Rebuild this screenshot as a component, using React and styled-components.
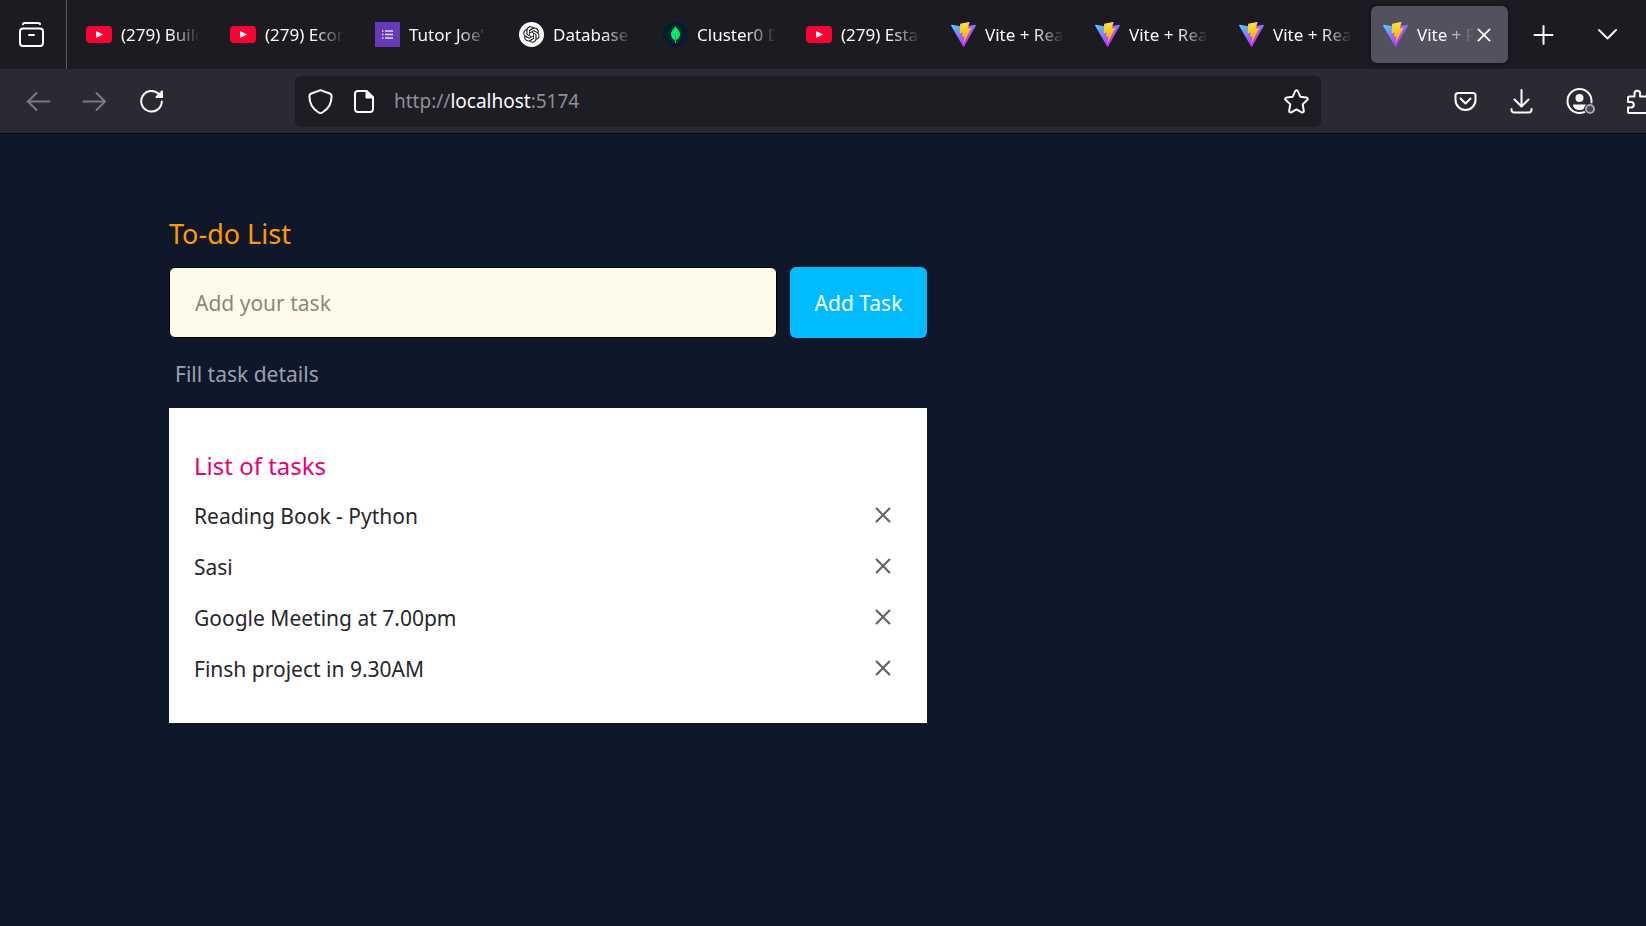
import React, { useState } from "react";
import styled, { createGlobalStyle } from "styled-components";

const GlobalStyle = createGlobalStyle`
  *, *::before, *::after { box-sizing: border-box; }
  html, body, #root { height: 100%; }
  body {
    margin: 0;
    background: #0f172a;
    font-family: "Segoe UI", "Noto Sans", sans-serif;
  }
  h1, h2, p, ul { margin: 0; padding: 0; font-weight: 400; }
  button, input { font: inherit; }
  svg { display: block; flex: none; }
`;

const Browser = styled.div`
  min-height: 100%;
  display: flex;
  flex-direction: column;
  overflow-x: hidden;
`;

const TabStrip = styled.header`
  display: flex;
  align-items: center;
  height: 69px;
  background: #1c1b22;
  color: #fbfbfe;
`;

const IconButton = styled.button`
  display: flex;
  align-items: center;
  justify-content: center;
  flex: none;
  width: ${(p) => p.$width || 56}px;
  height: 48px;
  padding: 0;
  border: 0;
  background: none;
  color: #fbfbfe;
  &:disabled { color: #7b7a81; }
`;

const ViewCell = styled.div`
  display: flex;
  align-items: center;
  flex: none;
  height: 100%;
  padding: 0 3px 0 0;
  border-right: 1px solid #5b5a62;
`;

const Tabs = styled.nav`
  display: flex;
  gap: 7px;
  padding: 0 7px 0 8px;
`;

const Tab = styled.div`
  display: flex;
  align-items: center;
  width: 137px;
  height: 57px;
  padding: 0 12px;
  border-radius: 6px;
  background: ${(p) => (p.$active ? "#52525e" : "transparent")};
  box-shadow: ${(p) => (p.$active ? "0 0 4px rgba(0, 0, 0, 0.5)" : "none")};
`;

const TabLink = styled.a`
  display: flex;
  align-items: center;
  gap: 9px;
  flex: 1;
  min-width: 0;
  color: inherit;
  text-decoration: none;
`;

const TabLabel = styled.span`
  flex: 1;
  overflow: hidden;
  white-space: nowrap;
  font-size: 17px;
  line-height: 24px;
  mask-image: linear-gradient(to left, transparent, #000 30px);
`;

const TabTools = styled.div`
  display: flex;
  flex: 1;
  justify-content: space-between;
  padding-right: 11px;
`;

const Toolbar = styled.div`
  display: flex;
  align-items: center;
  height: 65px;
  padding: 0 0 0 10px;
  background: #2b2a33;
  border-bottom: 1px solid #0c0c0d;
`;

const AddressBar = styled.div`
  display: flex;
  align-items: center;
  flex: 1;
  height: 51px;
  margin: 0 116px 0 115px;
  padding: 0 12px 0 13px;
  gap: 18px;
  border-radius: 6px;
  background: #1e1d23;
  color: #fbfbfe;
`;

const Address = styled.a`
  flex: 1;
  color: #8f8f95;
  font-size: 19px;
  line-height: 26px;
  text-decoration: none;
  strong { font-weight: 400; color: #fbfbfe; }
`;

const ToolGroup = styled.div`
  display: flex;
  flex: none;
  margin-right: -18px;
`;

const Page = styled.main`
  flex: 1;
  padding: 79px 169px 40px;
`;

const Todo = styled.section`
  max-width: 758px;
`;

const Title = styled.h1`
  color: #ff9a00;
  font-size: 27px;
  line-height: 42px;
`;

const TaskForm = styled.form`
  display: flex;
  gap: 13px;
  margin-top: 12px;
`;

const TaskInput = styled.input`
  flex: 1;
  min-width: 0;
  height: 71px;
  padding: 0 25px;
  border: 1px solid #000;
  border-radius: 6px;
  background: #fffbeb;
  color: #1f2937;
  font-size: 21px;
  &::placeholder { color: #8a887f; opacity: 1; }
`;

const AddButton = styled.button`
  flex: none;
  width: 137px;
  height: 71px;
  padding: 0;
  border: 0;
  border-radius: 6px;
  background: #00bcff;
  color: #fff;
  font-size: 21px;
`;

const Hint = styled.p`
  padding: 19px 6px 17px;
  color: #99a1af;
  font-size: 21px;
  line-height: 34px;
`;

const Card = styled.section`
  padding: 38px 25px 28px;
  background: #fff;
`;

const CardTitle = styled.h2`
  color: #e60076;
  font-size: 24px;
  line-height: 40px;
  padding-bottom: 5px;
`;

const TaskList = styled.ul`
  display: grid;
  list-style: none;
`;

const TaskRow = styled.li`
  display: flex;
  align-items: center;
  justify-content: space-between;
  padding-right: 4px;
  color: #27272a;
  font-size: 21px;
  line-height: 51px;
`;

const RemoveButton = styled(IconButton)`
  height: 32px;
  color: #5f6368;
  padding-bottom: 4px;
`;

const Line = ({ w = 25, box = 25, stroke = 2, children }) => (
  <svg width={w} height={w} viewBox={`0 0 ${box} ${box}`} fill="none" stroke="currentColor"
    strokeWidth={stroke} strokeLinecap="round" strokeLinejoin="round" aria-hidden="true">
    {children}
  </svg>
);

const Cross = ({ size, stroke = 2 }) => (
  <Line w={size} box={15} stroke={stroke}><path d="M1.500 1.500l12 12M13.500 1.500l-12 12" /></Line>
);

const YouTube = () => (
  <svg width="25" height="25" viewBox="0 0 25 25" overflow="visible">
    <rect x="-1" y="4" width="26" height="17" rx="4" fill="#ff0033" />
    <path d="M9 9v7l7-3.500z" fill="#fff" />
  </svg>
);

const Forms = () => (
  <svg width="25" height="25" viewBox="0 0 25 25">
    <path fill="#673ab7" d="M0 0h25v25H0z" />
    <path d="M10 9h8M10 12.500h8M10 16h8M7 9h1.500M7 12.500h1.500M7 16h1.500" stroke="#e5dcf3" strokeWidth="1.500" />
  </svg>
);

const OpenAI = () => (
  <svg width="25" height="25" viewBox="0 0 25 25">
    <circle cx="12.500" cy="12.500" r="12.500" fill="#fff" />
    <g transform="translate(4.200 4.200) scale(.69)" fill="#111">
      <path d="M22.282 9.821a5.985 5.985 0 0 0-.516-4.91 6.046 6.046 0 0 0-6.510-2.900A6.065 6.065 0 0 0 4.981 4.182a5.985 5.985 0 0 0-3.998 2.900 6.046 6.046 0 0 0 .743 7.097 5.980 5.980 0 0 0 .510 4.911 6.051 6.051 0 0 0 6.515 2.900A5.985 5.985 0 0 0 13.260 24a6.056 6.056 0 0 0 5.772-4.206 5.990 5.990 0 0 0 3.998-2.900 6.056 6.056 0 0 0-.748-7.073zM13.260 22.430a4.476 4.476 0 0 1-2.876-1.041l.142-.080 4.778-2.758a.795.795 0 0 0 .393-.681v-6.737l2.020 1.169a.071.071 0 0 1 .038.052v5.583a4.504 4.504 0 0 1-4.495 4.493zM3.600 18.304a4.470 4.470 0 0 1-.535-3.014l.142.085 4.783 2.759a.771.771 0 0 0 .780 0l5.843-3.369v2.332a.080.080 0 0 1-.033.062L9.740 19.950a4.500 4.500 0 0 1-6.140-1.646zM2.340 7.896a4.485 4.485 0 0 1 2.366-1.973V11.600a.766.766 0 0 0 .388.677l5.815 3.354-2.020 1.169a.076.076 0 0 1-.071 0l-4.830-2.787A4.504 4.504 0 0 1 2.340 7.872zm16.597 3.855-5.833-3.387L15.119 7.200a.076.076 0 0 1 .071 0l4.830 2.791a4.494 4.494 0 0 1-.676 8.105v-5.678a.790.790 0 0 0-.407-.667zm2.010-3.023-.142-.085-4.774-2.782a.776.776 0 0 0-.785 0L9.409 9.230V6.897a.066.066 0 0 1 .028-.061l4.830-2.787a4.500 4.500 0 0 1 6.680 4.660zM8.307 12.863l-2.020-1.164a.080.080 0 0 1-.038-.057V6.075a4.500 4.500 0 0 1 7.375-3.453l-.142.080L8.704 5.460a.795.795 0 0 0-.393.681zm1.097-2.365 2.602-1.500 2.607 1.500v2.999l-2.597 1.500-2.607-1.500z" />
    </g>
  </svg>
);

const Mongo = () => (
  <svg width="25" height="25" viewBox="0 0 25 25">
    <circle cx="12.500" cy="12.500" r="12.500" fill="#001e2b" />
    <path d="M12.500 4C13 6 17 8 17 12.500c0 3-2 4.500-3.800 6L13 21h-1l-.200-2.500C10 17 8 15.500 8 12.500 8 8 12 6 12.500 4z" fill="#00ed64" />
    <path d="M12.600 11v8" stroke="#00a35c" strokeWidth="1" />
  </svg>
);

const Vite = () => (
  <svg width="25" height="25" viewBox="0 0 256 257">
    <defs>
      <linearGradient id="shell" x1="-.8%" x2="57.600%" y1="7.700%" y2="78.400%">
        <stop offset="0%" stopColor="#41d1ff" /><stop offset="100%" stopColor="#bd34fe" />
      </linearGradient>
      <linearGradient id="bolt" x1="43.400%" x2="50.300%" y1="2.200%" y2="89%">
        <stop offset="0%" stopColor="#ffea83" /><stop offset="8.300%" stopColor="#ffdd35" /><stop offset="100%" stopColor="#ffa800" />
      </linearGradient>
    </defs>
    <path fill="url(#shell)" d="M255.153 37.938L134.897 252.976c-2.483 4.440-8.862 4.466-11.382.048L.875 37.958c-2.746-4.814 1.371-10.646 6.827-9.670l120.385 21.517a6.537 6.537 0 0 0 2.322-.004l117.867-21.483c5.438-.991 9.574 4.796 6.877 9.620Z" />
    <path fill="url(#bolt)" d="M185.432.063L96.440 17.501a3.268 3.268 0 0 0-2.634 3.014l-5.474 92.456a3.268 3.268 0 0 0 3.997 3.378l24.777-5.718c2.318-.535 4.413 1.507 3.936 3.838l-7.361 36.047c-.495 2.426 1.782 4.500 4.151 3.780l15.304-4.649c2.372-.720 4.652 1.360 4.150 3.788l-11.698 56.621c-.732 3.542 3.979 5.473 5.943 2.437l1.313-2.028l72.516-144.720c1.215-2.423-.880-5.186-3.540-4.672l-25.505 4.922c-2.396.462-4.435-1.770-3.759-4.114l16.646-57.705c.677-2.350-1.370-4.583-3.769-4.113Z" />
  </svg>
);

const TABS = [
  { icon: YouTube, label: "(279) Build" },
  { icon: YouTube, label: "(279) Econ" },
  { icon: Forms, label: "Tutor Joe'" },
  { icon: OpenAI, label: "Database" },
  { icon: Mongo, label: "Cluster0 D" },
  { icon: YouTube, label: "(279) Esta" },
  { icon: Vite, label: "Vite + Rea" },
  { icon: Vite, label: "Vite + Rea" },
  { icon: Vite, label: "Vite + Rea" },
  { icon: Vite, label: "Vite + R", active: true },
];

const CloseTab = styled(IconButton)`
  margin-left: 2px;
  margin-right: 5px;
`;

function BrowserTab({ icon: Icon, label, active }) {
  return (
    <Tab $active={active}>
      <TabLink href="#" aria-current={active ? "page" : undefined}>
        <Icon />
        <TabLabel>{label}</TabLabel>
      </TabLink>
      {active && <CloseTab $width={15} aria-label="Close tab"><Cross size={14} /></CloseTab>}
    </Tab>
  );
}

function Chrome() {
  return (
    <>
      <TabStrip>
        <ViewCell>
          <IconButton $width={63} aria-label="View tabs">
            <Line><path d="M4 2.200C4 1.200 5 1 6 1h13c1 0 2 .2 2 1.200" /><rect x="1" y="6.500" width="23" height="17.500" rx="3" /><path d="M10 13h5" /></Line>
          </IconButton>
        </ViewCell>
        <Tabs aria-label="Browser tabs">
          {TABS.map((t, i) => <BrowserTab key={i} {...t} />)}
        </Tabs>
        <TabTools>
          <IconButton aria-label="New tab"><Line><path d="M12.500 4v18M3.500 13h18" /></Line></IconButton>
          <IconButton aria-label="List all tabs"><Line><path d="M4 8l8.500 8.500L21 8" /></Line></IconButton>
        </TabTools>
      </TabStrip>
      <Toolbar>
        <IconButton disabled aria-label="Back"><Line><path d="M23.500 12.500H1.500M10.500 4L2 12.500l8.500 8.500" /></Line></IconButton>
        <IconButton $width={57} disabled aria-label="Forward"><Line><path d="M1.500 12.500H23M14.500 4l8.500 8.500-8.500 8.500" /></Line></IconButton>
        <IconButton $width={57} aria-label="Reload">
          <Line><path d="M20 5.200A10.300 10.300 0 1 0 22.800 12.500" /><path d="M23 2.500V8h-5.500z" fill="currentColor" /></Line>
        </IconButton>
        <AddressBar>
          <Line><path d="M12.500 1.200c1 0 1.300.4 2.200.8l7 2.500c1.300.5 1.900 1.200 1.900 2.500 0 7.500-2.800 12.500-8.600 16-1 .7-1.700 1.200-2.500 1.200s-1.500-.5-2.500-1.200C4.200 19.500 1.400 14.500 1.400 7c0-1.300.6-2 1.900-2.500l7-2.500c.9-.4 1.200-.8 2.200-.8z" /></Line>
          <Line><path d="M7 2h8.500l6.500 6.500V20a3 3 0 0 1-3 3H7a3 3 0 0 1-3-3V5a3 3 0 0 1 3-3z" /><path d="M15.500 2v6.500H22z" fill="currentColor" /></Line>
          <Address href="#">http://<strong>localhost</strong>:5174</Address>
          <Line><path d="M11.200 2.200c.5-1.200 2.100-1.200 2.600 0l2.500 5.500 6 .7c1.400.2 1.900 1.600.9 2.600l-4.500 4.200 1.100 6.600c.2 1.300-1 2.100-2.200 1.500l-5.100-3-5.100 3c-1.200.6-2.400-.2-2.200-1.500l1.100-6.600L1.800 11c-1-1-.5-2.400.9-2.600l6-.7z" /></Line>
        </AddressBar>
        <ToolGroup>
          <IconButton aria-label="Save to Pocket">
            <Line><path d="M5 4h15a2.500 2.500 0 0 1 2.500 2.500V11a10 10 0 0 1-20 0V6.500A2.500 2.500 0 0 1 5 4z" /><path d="M7.500 9.500l5 5 5-5" /></Line>
          </IconButton>
          <IconButton aria-label="Downloads">
            <Line><path d="M12.500 1v16M5.500 10.500l7 7 7-7M2.500 20v1a2.500 2.500 0 0 0 2.500 2.500h15a2.500 2.500 0 0 0 2.500-2.500v-1" /></Line>
          </IconButton>
          <IconButton $width={63} aria-label="Account">
            <Line w={29} box={29}>
              <circle cx="13.500" cy="14" r="12" />
              <circle cx="13.500" cy="11" r="4" fill="currentColor" stroke="none" />
              <path d="M7 17.500h13c0 3.500-3 5.500-6.500 5.500S7 21 7 17.500z" fill="currentColor" stroke="none" />
              <circle cx="24" cy="22" r="6" fill="#2b2a33" stroke="none" />
              <circle cx="24" cy="22" r="4" fill="#46454e" stroke="#a5a5aa" />
            </Line>
          </IconButton>
          <IconButton $width={52} aria-label="Extensions">
            <Line><path d="M8.500 7.500V4.500a2.800 2.800 0 0 1 5.600 0v3h6a2 2 0 0 1 2 2V22a2 2 0 0 1-2 2H3.500a1.500 1.500 0 0 1-1.500-1.500V18.500h3a2.800 2.800 0 0 0 0-5.600H2V9a1.500 1.500 0 0 1 1.500-1.500z" /></Line>
          </IconButton>
        </ToolGroup>
      </Toolbar>
    </>
  );
}

export default function App() {
  const [draft, setDraft] = useState("");
  const [tasks, setTasks] = useState([
    "Reading Book - Python",
    "Sasi",
    "Google Meeting at 7.00pm",
    "Finsh project in 9.30AM",
  ]);

  const addTask = (e) => {
    e.preventDefault();
    if (!draft.trim()) return;
    setTasks([...tasks, draft.trim()]);
    setDraft("");
  };

  return (
    <Browser>
      <GlobalStyle />
      <Chrome />
      <Page>
        <Todo>
          <Title>To-do List</Title>
          <TaskForm onSubmit={addTask}>
            <TaskInput aria-label="Task" aria-describedby="task-hint" placeholder="Add your task"
              value={draft} onChange={(e) => setDraft(e.target.value)} />
            <AddButton type="submit">Add Task</AddButton>
          </TaskForm>
          <Hint id="task-hint">Fill task details</Hint>
          <Card>
            <CardTitle>List of tasks</CardTitle>
            <TaskList>
              {tasks.map((task, i) => (
                <TaskRow key={task}>
                  {task}
                  <RemoveButton $width={31} aria-label={`Remove ${task}`}
                    onClick={() => setTasks(tasks.filter((_, j) => j !== i))}>
                    <Cross size={16} stroke={2} />
                  </RemoveButton>
                </TaskRow>
              ))}
            </TaskList>
          </Card>
        </Todo>
      </Page>
    </Browser>
  );
}
